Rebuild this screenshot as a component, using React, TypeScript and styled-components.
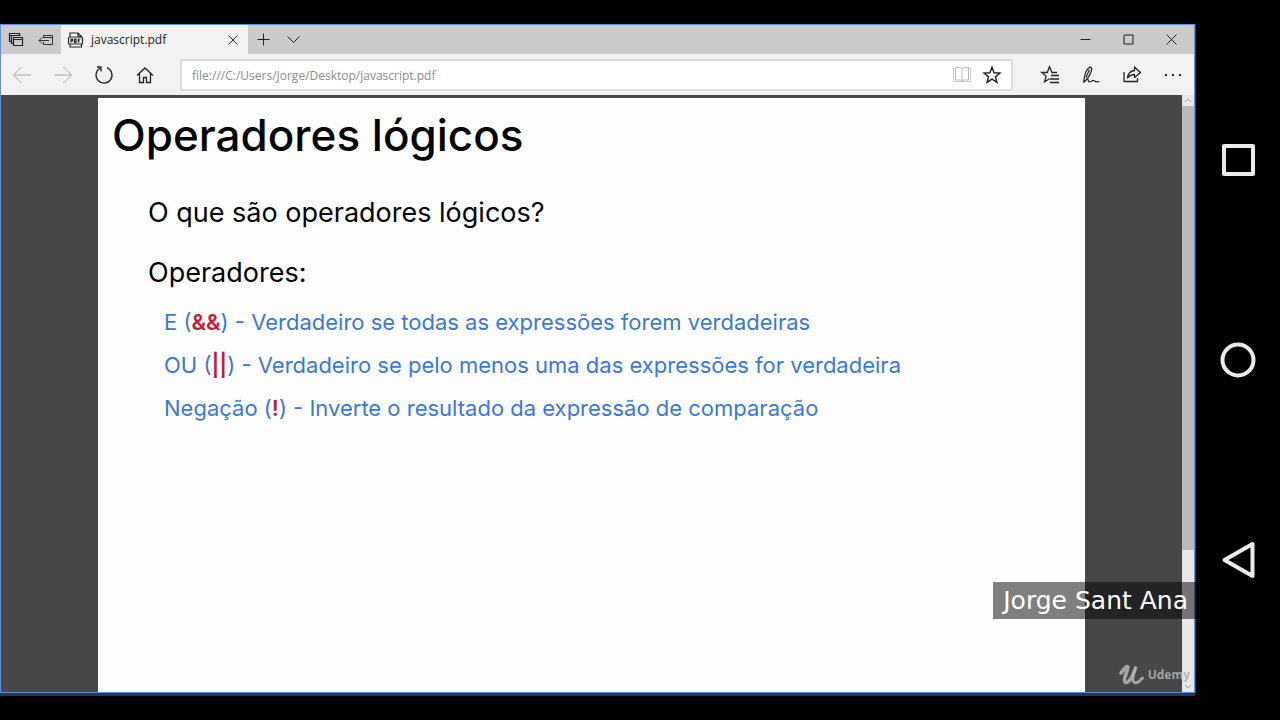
import React from "react";
import styled, { createGlobalStyle } from "styled-components";

const GlobalStyle = createGlobalStyle`
  *, *::before, *::after { box-sizing: border-box; }
  body { margin: 0; background: #000; }
  button, input { font: inherit; color: inherit; }
`;

const Screen = styled.div`
  display: flex;
  min-height: 100vh;
  padding: 24px 0;
  background: #000;
  font-family: "Open Sans", "Noto Sans", sans-serif;
  font-size: 12px;
`;

const BrowserWindow = styled.div`
  position: relative;
  flex: 1;
  min-width: 0;
  display: flex;
  flex-direction: column;
  border: 1px solid #5e93dc;
  border-bottom-color: #4d92d6;
  box-shadow: 0 3px 0 #27384f, 1px 0 0 #174a80;
  margin: 0 1px 3px 0;
`;

const TabStrip = styled.div`
  display: flex;
  height: 29px;
  padding-right: 1px;
  background: #cbcbcc;
`;

const IconButton = styled.button<{ $width: number; $faded?: boolean }>`
  display: flex;
  align-items: center;
  justify-content: center;
  flex: none;
  width: ${(p) => p.$width}px;
  padding: 0;
  border: 0;
  background: none;
  color: ${(p) => (p.$faded ? "#a6a6a6" : "#222")};

  svg {
    display: block;
    fill: none;
    stroke: currentColor;
  }
`;

const Tab = styled.div`
  display: flex;
  align-items: center;
  flex: none;
  width: 187px;
  padding-left: 6px;
  background: #f2f2f3;
  color: #222;

  > svg {
    flex: none;
    margin-right: 7px;
  }
`;

const TabTitle = styled.span`
  flex: 1;
`;

const WindowControls = styled.div`
  display: flex;
  margin-left: auto;
`;

const Toolbar = styled.div`
  display: flex;
  align-items: stretch;
  height: 41px;
  padding-right: 1px;
  background: #f2f2f3;
`;

const AddressBar = styled.div`
  display: flex;
  flex: 1;
  min-width: 0;
  margin: 5px 16px 4px 15px;
  border: 2px solid #dcdcdd;
  background: #fff;
  padding-right: 4px;
`;

const AddressInput = styled.input`
  flex: 1;
  min-width: 0;
  border: 0;
  padding: 0 10px;
  outline: 0;
  background: none;
  color: #8c8c8c;
`;

const Viewer = styled.div`
  flex: 1;
  display: flex;
  background: #474747;
`;

const Canvas = styled.main`
  flex: 1;
  display: flex;
  padding: 3px 97px 0;
`;

const Page = styled.article`
  flex: 1;
  padding: 11px 14px;
  background: #fefefe;
  color: #050505;
  font-family: Inter, Lato, sans-serif;
`;

const Title = styled.h1`
  margin: 0;
  font-size: 44px;
  line-height: 52px;
  font-weight: 500;
`;

const Section = styled.section`
  padding: 32px 0 0 36px;
`;

const Heading = styled.h2`
  margin: 0;
  font-size: 27px;
  line-height: 40px;
  font-weight: 400;

  & + & {
    margin-top: 20px;
  }
`;

const OperatorList = styled.ul`
  list-style: none;
  margin: 8px 0 0 16px;
  padding: 0;
  color: #3b78d8;
  font-size: 22px;
  line-height: 43px;
`;

const Operator = styled.code`
  color: #c4203a;
  font: inherit;
  font-weight: 600;
`;

const ScrollBar = styled.div`
  display: flex;
  flex-direction: column;
  align-items: center;
  width: 12px;
  background: #e8e8e9;

  svg {
    display: block;
    fill: none;
    stroke: #999;
  }
`;

const ScrollThumb = styled.div`
  width: 100%;
  flex: 443;
  margin-top: 1px;
  background: #bababb;
`;

const ScrollRest = styled.div`
  flex: 132;
`;

const Caption = styled.div`
  position: absolute;
  right: -2px;
  bottom: 73px;
  padding: 1px 8px 1px 10px;
  background: rgba(0, 0, 0, 0.5);
  color: #fff;
  font-family: "DejaVu Sans", Verdana, sans-serif;
  font-size: 25px;
  line-height: 35px;
`;

const Watermark = styled.div`
  position: absolute;
  right: 4px;
  bottom: 5px;
  display: flex;
  align-items: center;
  gap: 4px;
  color: rgba(175, 175, 175, 0.9);
  font-size: 12px;
  line-height: 24px;
  font-weight: 700;
`;

const NavBar = styled.nav`
  display: flex;
  flex-direction: column;
  justify-content: space-around;
  align-items: center;
  flex: none;
  width: 84px;
  margin: -24px 0;
  padding: 60px 0;
`;

const NavButton = styled.button`
  padding: 0;
  border: 0;
  background: none;

  svg {
    display: block;
    fill: none;
    stroke: #ebebeb;
    stroke-width: 4;
    stroke-linejoin: round;
  }
`;

const STAR = "M10 2.2 12.1 7.7 18 8 13.4 11.7 15 17.4 10 14.2 5 17.4 6.6 11.7 2 8 7.9 7.7Z";

const operators = [
  { name: "E", symbol: "&&", text: "Verdadeiro se todas as expressões forem verdadeiras" },
  { name: "OU", symbol: "||", text: "Verdadeiro se pelo menos uma das expressões for verdadeira" },
  { name: "Negação", symbol: "!", text: "Inverte o resultado da expressão de comparação" },
];

export default function App() {
  return (
    <>
      <GlobalStyle />
      <Screen>
        <BrowserWindow>
          <TabStrip>
            <IconButton $width={30} aria-label="Guias reservadas">
              <svg width="16" height="16" viewBox="0 0 16 16" strokeWidth="1.2">
                <path d="M3.500 9.500h-2v-8h10v2.500M1.500 3.500h10M5 11.500H3.500v-8h9" />
                <path d="M5.500 5.500h9v8h-9zM5.500 7.500h9" />
              </svg>
            </IconButton>
            <IconButton $width={30} aria-label="Reservar guias">
              <svg width="16" height="16" viewBox="0 0 16 16">
                <path d="M5.500 6V3.500h9v9h-9V10M5.500 5.500h9M11 8.500H1M4 5.500l-3 3 3 3" strokeWidth=".9" />
              </svg>
            </IconButton>
            <Tab>
              <svg width="17" height="18" viewBox="0 0 17 18" fill="none" stroke="#222" strokeWidth="1.2">
                <path d="M3 6V2h8l3.500 3.500V6M3 13v3h11.500v-3M11 2v3.500h3.500" />
                <rect x="1.5" y="6" width="14" height="7" rx="1" />
                <path d="M4 11.500V8h1.500v2H4M7.500 8v3.500H9V8zM11.300 11.500V8h2.200M11.300 10h1.700" />
              </svg>
              <TabTitle>javascript.pdf</TabTitle>
              <IconButton $width={30} aria-label="Fechar guia">
                <svg width="12" height="12" viewBox="0 0 12 12">
                  <path d="m1.500 1.500 9 9m0-9-9 9" />
                </svg>
              </IconButton>
            </Tab>
            <IconButton $width={30} aria-label="Nova guia">
              <svg width="13" height="13" viewBox="0 0 13 13">
                <path d="M6.500.5v12M.5 6.500h12" />
              </svg>
            </IconButton>
            <IconButton $width={30} aria-label="Visualizações de guias">
              <svg width="13" height="13" viewBox="0 0 13 13">
                <path d="m.5 3.500 6 6 6-6" />
              </svg>
            </IconButton>
            <WindowControls>
              <IconButton $width={43} aria-label="Minimizar">
                <svg width="11" height="11" viewBox="0 0 11 11"><path d="M.5 5.500h10" /></svg>
              </IconButton>
              <IconButton $width={43} aria-label="Maximizar">
                <svg width="11" height="11" viewBox="0 0 11 11"><path d="M1 1h9v9H1z" /></svg>
              </IconButton>
              <IconButton $width={43} aria-label="Fechar">
                <svg width="11" height="11" viewBox="0 0 11 11"><path d="m.5.5 10 10m0-10-10 10" /></svg>
              </IconButton>
            </WindowControls>
          </TabStrip>

          <Toolbar>
            <IconButton $width={41} $faded aria-label="Voltar">
              <svg width="20" height="18" viewBox="0 0 20 18"><path d="M19 9H2M9.500 1 1.500 9l8 8" /></svg>
            </IconButton>
            <IconButton $width={41} $faded aria-label="Avançar">
              <svg width="20" height="18" viewBox="0 0 20 18"><path d="M1 9h17M10.500 1l8 8-8 8" /></svg>
            </IconButton>
            <IconButton $width={41} aria-label="Atualizar">
              <svg width="20" height="20" viewBox="0 0 20 20" strokeWidth="1.3">
                <path d="M13 2.700A8 8 0 1 1 6 3.200M3 2h4v4.500" />
              </svg>
            </IconButton>
            <IconButton $width={41} aria-label="Início">
              <svg width="18" height="18" viewBox="0 0 18 18" strokeWidth="1.3">
                <path d="m1 9.500 8-7.500 8 7.500M3.500 8v8.500h4v-5h3v5h4V8" />
              </svg>
            </IconButton>
            <AddressBar>
              <AddressInput aria-label="Endereço" defaultValue="file:///C:/Users/Jorge/Desktop/javascript.pdf" />
              <IconButton $width={30} $faded aria-label="Modo de leitura">
                <svg width="20" height="18" viewBox="0 0 20 18">
                  <path d="M4 2.500H1.500v13h17v-13H16" stroke="#ccc" />
                  <path d="M10 3v12M3.500 1.500H8.500L10 3l1.500-1.500h5v12.500h-5L10 15l-1.500-1H3.500z" stroke="#bbb" />
                </svg>
              </IconButton>
              <IconButton $width={30} aria-label="Adicionar aos favoritos">
                <svg width="20" height="20" viewBox="0 0 20 20" strokeWidth="1.4"><path d={STAR} /></svg>
              </IconButton>
            </AddressBar>
            <IconButton $width={41} aria-label="Favoritos">
              <svg width="20" height="20" viewBox="0 0 20 20" strokeWidth="1.3">
                <path d="M17 7.500h-5L9.500 1.800 7.300 7.500H1.800l4.300 3.800-1.600 5.500 5-3" />
                <path d="M11 10.500h8M10 14h9M10 17.500h9" />
              </svg>
            </IconButton>
            <IconButton $width={41} aria-label="Anotar">
              <svg width="20" height="20" viewBox="0 0 20 20" strokeWidth="1.200" strokeLinejoin="round">
                <path d="M2.500 17.500 4 9.500C5 5.500 8 1.500 9.800 2.200 12 3 10 8.500 6.500 13.500L2.500 17.500M5 12.500 8.500 4.500" />
                <path d="M6.500 13.500C7.500 14.500 7 17 8.500 17c1.800 0 2.800-2.500 4.500-1.300 1.500 1.100 2.500 2 5.500.8" />
              </svg>
            </IconButton>
            <IconButton $width={41} aria-label="Compartilhar">
              <svg width="20" height="20" viewBox="0 0 20 20" strokeWidth="1.3" strokeLinejoin="round">
                <path d="M2 7v9.500h13.500V13" />
                <path d="M5.500 13C6 8.500 8 6 12.500 5.500V2L18.500 7.500l-6 5V9.500C9.500 9.500 7.500 10.500 5.500 13Z" />
              </svg>
            </IconButton>
            <IconButton $width={41} aria-label="Configurações e mais">
              <svg width="18" height="4" viewBox="0 0 18 4">
                <path d="M1 2h2M8 2h2M15 2h2" strokeWidth="2" />
              </svg>
            </IconButton>
          </Toolbar>

          <Viewer>
            <Canvas>
              <Page>
                <Title>Operadores lógicos</Title>
                <Section>
                  <Heading>O que são operadores lógicos?</Heading>
                  <Heading>Operadores:</Heading>
                  <OperatorList>
                    {operators.map((o) => (
                      <li key={o.name}>
                        {o.name} (<Operator>{o.symbol}</Operator>) - {o.text}
                      </li>
                    ))}
                  </OperatorList>
                </Section>
              </Page>
            </Canvas>
            <ScrollBar>
              <svg width="10" height="10" viewBox="0 0 10 10"><path d="m2 7 3-3 3 3" /></svg>
              <ScrollThumb />
              <ScrollRest />
              <svg width="10" height="10" viewBox="0 0 10 10"><path d="m2 3 3 3 3-3" /></svg>
            </ScrollBar>
          </Viewer>

          <Caption>Jorge Sant Ana</Caption>
          <Watermark>
            <svg width="25" height="22" viewBox="0 0 25 22" fill="none" stroke="currentColor" strokeLinecap="round" strokeLinejoin="round">
              <path d="M2 9C4 7 6 3 8 2.500 11 2 5 13 5.500 16.500 6 21.500 12 17 14.500 9.500L16.500 4" strokeWidth="3.600" />
              <path d="M16.500 4C14 10 12.500 17 15.500 18.500 18 19.500 21 17 23.500 14" strokeWidth="2.800" />
            </svg>
            Udemy
          </Watermark>
        </BrowserWindow>

        <NavBar aria-label="Navegação do sistema">
          <NavButton aria-label="Recentes">
            <svg width="36" height="40" viewBox="0 0 36 40"><rect x="4" y="6" width="29" height="28" /></svg>
          </NavButton>
          <NavButton aria-label="Tela inicial">
            <svg width="36" height="40" viewBox="0 0 36 40"><circle cx="18" cy="20" r="15.500" /></svg>
          </NavButton>
          <NavButton aria-label="Voltar">
            <svg width="36" height="40" viewBox="0 0 36 40"><path d="M32.500 4v32L4.500 20z" /></svg>
          </NavButton>
        </NavBar>
      </Screen>
    </>
  );
}
